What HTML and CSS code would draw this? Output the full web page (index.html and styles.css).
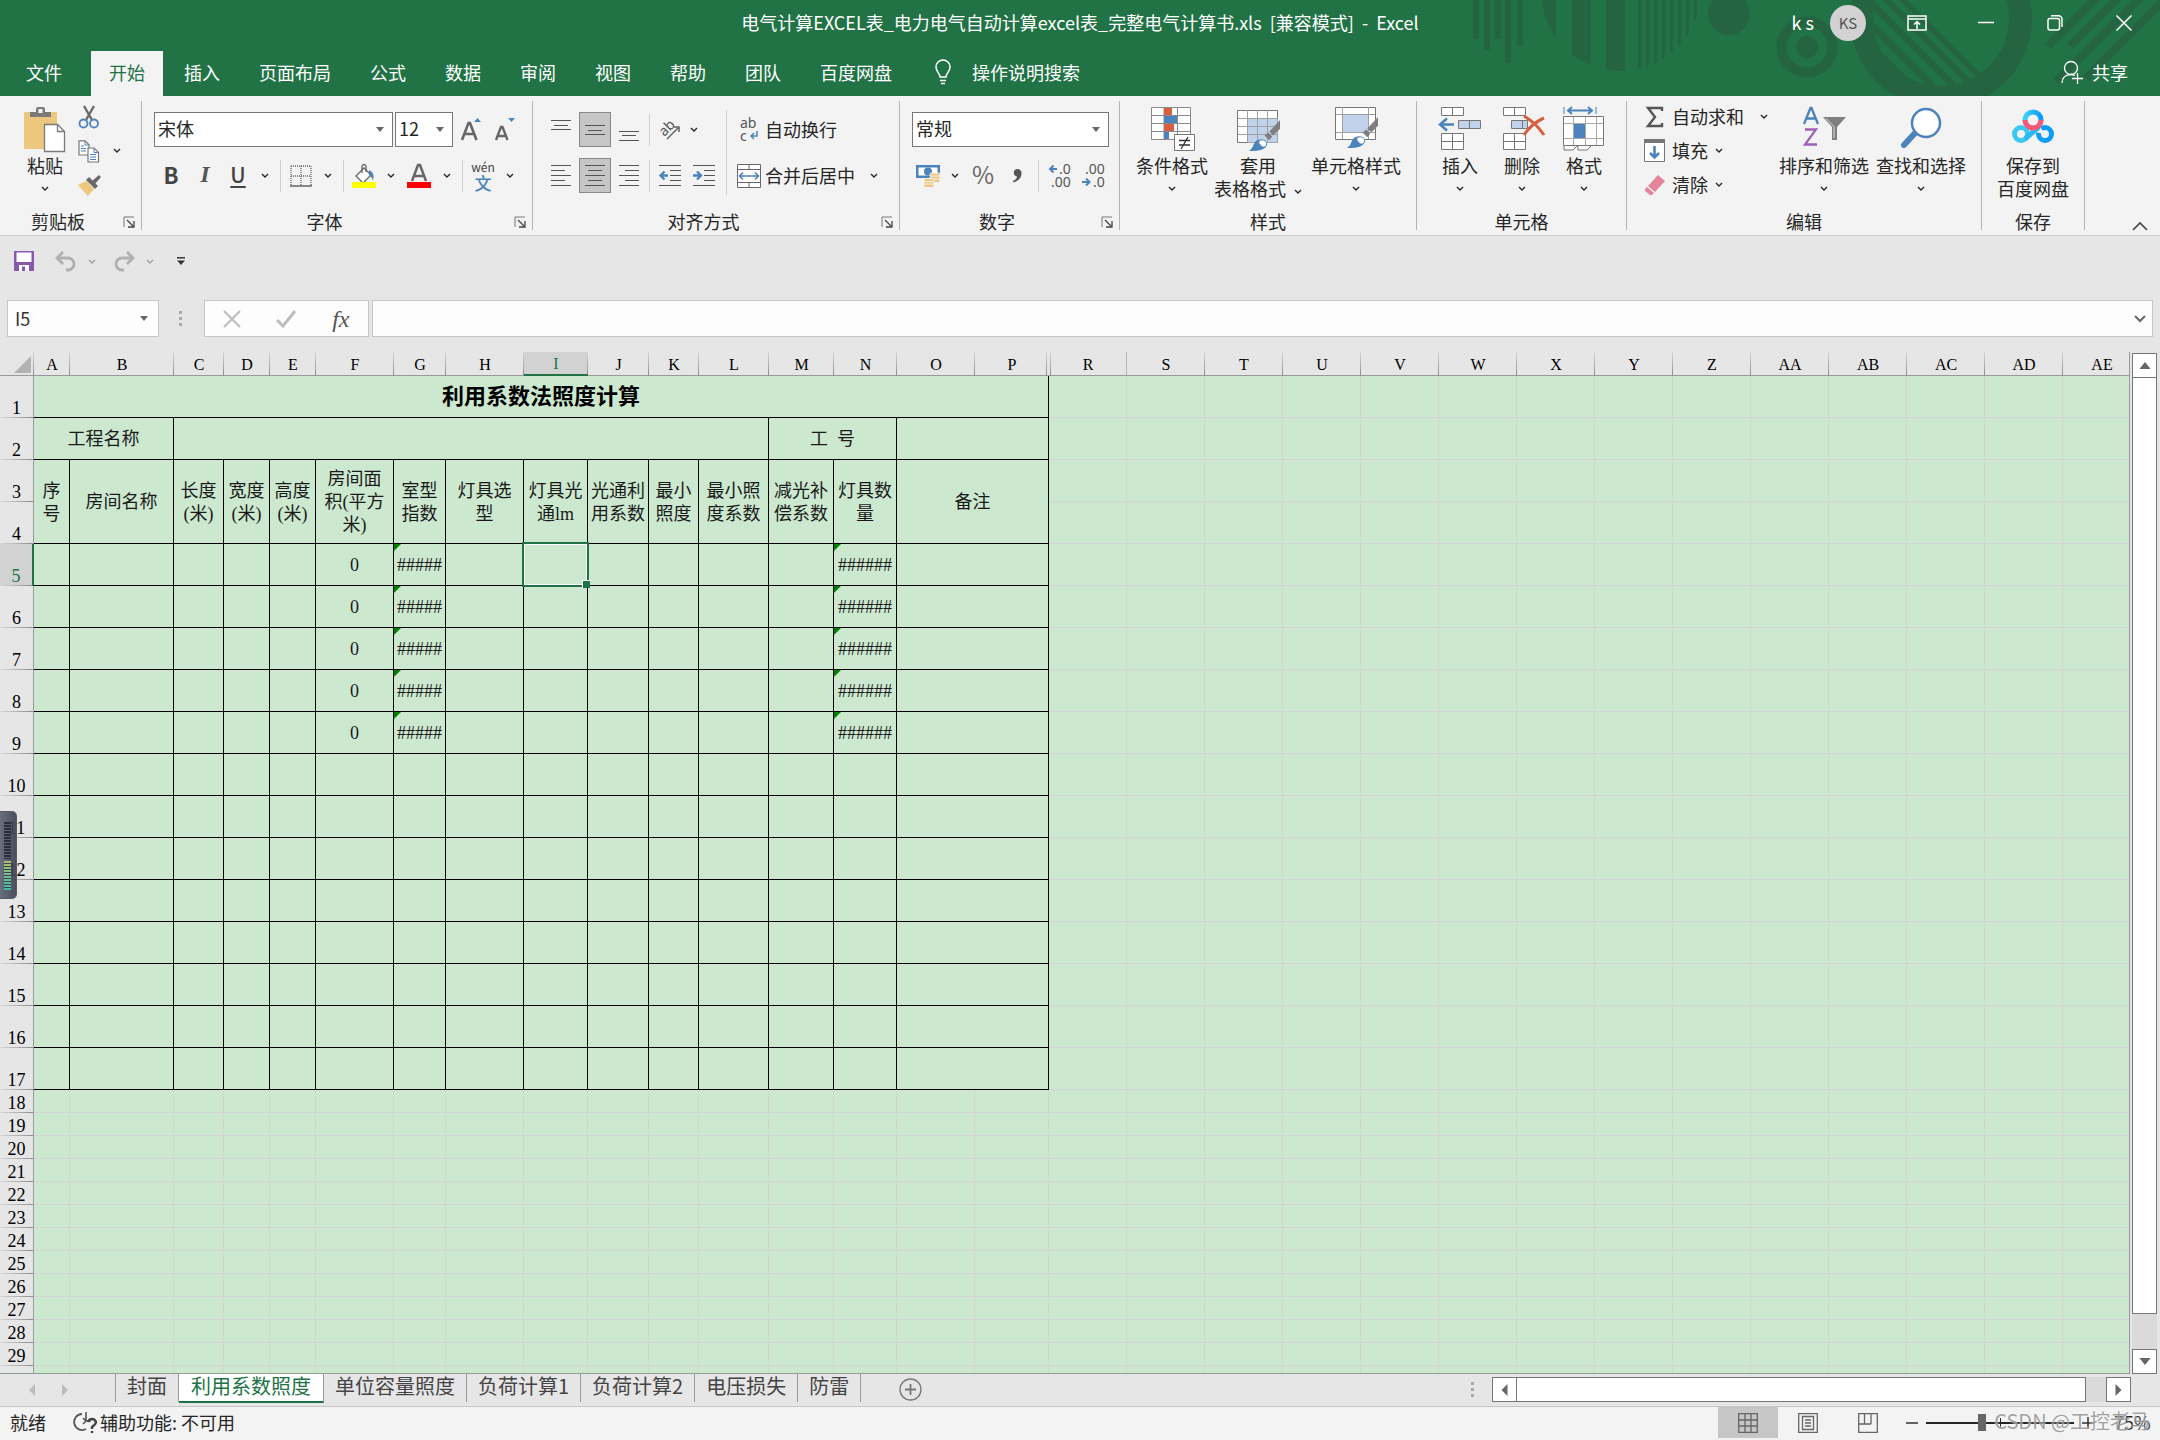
FILE: index.html
```html
<!DOCTYPE html>
<html lang="zh-CN">
<head>
<meta charset="utf-8">
<meta name="viewport" content="width=device-width, initial-scale=1">
<title>电气计算EXCEL表 - Excel</title>
<link rel="stylesheet" href="styles.css">
</head>
<body>
<svg class="defs" aria-hidden="true">
  <symbol id="chev" viewBox="0 0 8 5"><path d="M1 1l3 3 3-3" fill="none" stroke="currentColor" stroke-width="1.4"/></symbol>
  <symbol id="tri" viewBox="0 0 8 5"><path d="M0 0h8L4 5z" fill="currentColor"/></symbol>
  <symbol id="launch" viewBox="0 0 12 12"><path d="M1 11V1h10" fill="none" stroke="#777"/><path d="M4 4l6 6M11 5v6H5" fill="none" stroke="#444" stroke-width="1.3"/></symbol>
  <symbol id="brush" viewBox="0 0 34 34"><path d="M33 1v9l-7 7-4-4z" fill="#7f7f7f"/><path d="M21 14l4 4-3 4-5-5z" fill="#7f7f7f"/><path d="M1 33c5-3 4-8 8-11 4-2 9 0 10 4 0 5-6 7-18 7z" fill="#4c83bc"/><path d="M12 22c4-2 8 1 7 5-2 3-5 2-6 0-1-1-3-2-1-5z" fill="#fff" stroke="#4c83bc"/></symbol>
</svg>

<header class="top">
  <svg class="pattern" viewBox="0 0 720 96" aria-hidden="true">
    <clipPath id="c1"><circle cx="181" cy="-9" r="80"/></clipPath>
    <clipPath id="c2"><circle cx="501" cy="18" r="68"/></clipPath>
    <g fill="#246441">
      <path d="M33 0h6v39h-6zM44 0h6v50h-6zM55 0h6v39h-6zM65 0h6v63h-6zM77 0h6v46h-6z"/>
      <path clip-path="url(#c1)" d="M100 0h16v96h-16zM132 0h19v96h-19zM166 0h19v96h-19zM198 0h3v96h-3zM206 0h3v96h-3zM214 0h3v96h-3zM222 0h3v96h-3zM230 0h3v96h-3zM238 0h3v96h-3zM246 0h3v96h-3zM254 0h3v96h-3z"/>
      <circle cx="289" cy="14" r="21"/><circle cx="367" cy="47" r="11"/>
      <path clip-path="url(#c2)" d="M380 0h10l96 96h-10zM401 0h10l96 96h-10zM423 0h10l96 96h-10zM442 0h9l96 96h-9zM459 0h8l96 96h-8z"/>
    </g>
    <g fill="none" stroke="#246441">
      <circle cx="367" cy="47" r="25.500" stroke-width="10"/>
      <circle cx="501" cy="18" r="79.500" stroke-width="23"/>
      <path stroke-width="8" d="M608 46l52-52M630 46l52-52M616 82l90-90M646 78l80-80"/>
    </g>
  </svg>
  <div class="titlebar">
    <h1 class="doc-title">电气计算EXCEL表_电力电气自动计算excel表_完整电气计算书.xls&nbsp; [兼容模式]&nbsp; -&nbsp; Excel</h1>
    <div class="account">
      <span class="user">k s</span><span class="avatar">KS</span>
      <button class="win" aria-label="功能区显示选项"><svg width="20" height="16" viewBox="0 0 20 16"><path d="M1 1h18v14H1zM1 4h18M10 14V7M7 9.500l3-3 3 3" fill="none" stroke="#fff" stroke-width="1.500"/></svg></button>
      <button class="win" aria-label="最小化"><svg width="16" height="16" viewBox="0 0 16 16"><path d="M0 7.500h16" stroke="#fff" stroke-width="1.500"/></svg></button>
      <button class="win" aria-label="还原"><svg width="16" height="16" viewBox="0 0 16 16"><path d="M4 .8h7.500a3.500 3.500 0 0 1 3.500 3.500V12" fill="none" stroke="#fff" stroke-width="1.400"/><rect x="1" y="3.500" width="11.500" height="11.500" rx="2" fill="none" stroke="#fff" stroke-width="1.500"/></svg></button>
      <button class="win" aria-label="关闭"><svg width="16" height="16" viewBox="0 0 16 16"><path d="M.5.5l15 15M15.500.5l-15 15" stroke="#fff" stroke-width="1.500"/></svg></button>
    </div>
  </div>
  <nav class="tabs">
    <button class="tab file">文件</button><button class="tab on">开始</button><button class="tab">插入</button><button class="tab">页面布局</button><button class="tab">公式</button><button class="tab">数据</button><button class="tab">审阅</button><button class="tab">视图</button><button class="tab">帮助</button><button class="tab">团队</button><button class="tab">百度网盘</button>
    <button class="tell"><svg width="18" height="26" viewBox="0 0 18 26"><path d="M6 18c0-4-4-5-4-10a7 7 0 0 1 14 0c0 5-4 6-4 10zM6 21.500h6M7 24.500h4" fill="none" stroke="#fff" stroke-width="1.500"/></svg>操作说明搜索</button>
    <button class="share"><svg width="23" height="24" viewBox="0 0 23 24"><circle cx="10" cy="8" r="6.500" fill="none" stroke="#fff" stroke-width="1.300"/><path d="M1 23c0-5 3-8.500 9-8.500 2 0 3 .5 4 1M11 18.500h11M16.500 13v11" fill="none" stroke="#fff" stroke-width="1.300"/></svg>共享</button>
  </nav>
</header>

<section class="ribbon">
  <div class="group g-clip">
    <div class="body">
      <button class="big paste"><svg width="42" height="46" viewBox="0 0 42 46"><rect x="0" y="5" width="33" height="37" rx="1" fill="#eec77e"/><path d="M6 10V5h6V2q0-2 2-2h5q2 0 2 2v3h6v5z" fill="#7a7a7a"/><rect x="14.500" y="2" width="4" height="4" fill="#f3f3f3"/><path d="M20.500 17.500h13l7 7v20h-20z" fill="#fff" stroke="#7a7a7a" stroke-width="1.300"/><path d="M33.500 17.500v7h7" fill="none" stroke="#7a7a7a" stroke-width="1.300"/></svg><span>粘贴</span><span class="ch"><svg width="8" height="5"><use href="#chev"/></svg></span></button>
      <div class="stack">
        <button class="line" aria-label="剪切"><svg width="22" height="24" viewBox="0 0 22 24"><path d="M6 1l8 14M16 1L8 15" stroke="#6a6a6a" stroke-width="2.400"/><circle cx="5.500" cy="18.500" r="4" fill="none" stroke="#4c83bc" stroke-width="1.800"/><circle cx="16" cy="18.500" r="4" fill="none" stroke="#4c83bc" stroke-width="1.800"/></svg></button>
        <button class="line" aria-label="复制"><svg width="22" height="23" viewBox="0 0 22 23"><path d="M1 .8h6l4 4V15H1z" fill="#fff" stroke="#777" stroke-width="1.200"/><path d="M10 8h6l4.500 4.500V22H10z" fill="#fff" stroke="#777" stroke-width="1.200"/><path d="M7 1v4h4M16 8v4.500h4M12 14.500h6M12 17h6M12 19.500h6M3 6h3M3 8.500h5M3 11h5" fill="none" stroke="#4c83bc"/></svg><span class="ch"><svg width="8" height="5"><use href="#chev"/></svg></span></button>
        <button class="line" aria-label="格式刷"><svg width="24" height="22" viewBox="0 0 24 22"><path d="M0 11l8-4 8 8-6 7z" fill="#eec77e"/><path d="M8 6l3-3 9 9-3 3z" fill="#6a6a6a"/><path d="M14 7l7-6 2 2-6 7z" fill="#6a6a6a"/></svg></button>
      </div>
    </div>
    <div class="foot"><span>剪贴板</span><button class="dlg" aria-label="剪贴板设置"><svg width="12" height="12"><use href="#launch"/></svg></button></div>
  </div>

  <div class="group g-font">
    <div class="body rows">
      <div class="row">
        <label class="combo w-font"><select aria-label="字体"><option>宋体</option></select><svg width="8" height="5"><use href="#tri"/></svg></label>
        <label class="combo w-size"><select aria-label="字号"><option>12</option></select><svg width="8" height="5"><use href="#tri"/></svg></label>
        <button class="t34" aria-label="增大字号"><svg width="20" height="24" viewBox="0 0 20 24"><path d="M1 22L7.500 5h1.500l6.500 17M3.500 16h9.500" fill="none" stroke="#666" stroke-width="2.600"/><path d="M13 4l3.500-4L20 4z" fill="#4c83bc"/></svg></button>
        <button class="t34" aria-label="减小字号"><svg width="20" height="24" viewBox="0 0 20 24"><path d="M1 22L6 9h1.500l5 13M3 18h7.500" fill="none" stroke="#666" stroke-width="2.400"/><path d="M13 0l3.500 4L20 0z" fill="#4c83bc"/></svg></button>
      </div>
      <div class="row">
        <button class="t34 fb">B</button><button class="t34 fi">I</button><button class="t32 fu">U</button><button class="chb" aria-label="下划线"><svg width="8" height="5"><use href="#chev"/></svg></button><i class="sep"></i>
        <button class="t32" aria-label="边框"><svg width="22" height="22" viewBox="0 0 22 22"><path d="M1 1h20M1 11h20M1 1v20M11 1v20M21 1v20" stroke="#666" stroke-dasharray="1 1" stroke-width="1.300"/><path d="M0 21h22" stroke="#666" stroke-width="1.500"/></svg></button><button class="chb" aria-label="边框选项"><svg width="8" height="5"><use href="#chev"/></svg></button><i class="sep"></i>
        <button class="t32" aria-label="填充颜色"><svg width="24" height="24" viewBox="0 0 24 24"><path d="M12 4l7 7-8 8-7-7z" fill="#fff" stroke="#666" stroke-width="1.300"/><path d="M10 9V2q2-3 4 0v6" fill="none" stroke="#666" stroke-width="1.300"/><path d="M17 6q6 2 4 11-1-4-4-6z" fill="#4c83bc"/><path d="M0 18h24v6H0z" fill="#ff0"/></svg></button><button class="chb" aria-label="填充颜色选项"><svg width="8" height="5"><use href="#chev"/></svg></button>
        <button class="t34" aria-label="字体颜色"><svg width="24" height="24" viewBox="0 0 24 24"><path d="M5 17L11 1h2l6 16M7.500 12h9" fill="none" stroke="#666" stroke-width="2.500"/><path d="M0 18h24v6H0z" fill="#f00"/></svg></button><button class="chb" aria-label="字体颜色选项"><svg width="8" height="5"><use href="#chev"/></svg></button><i class="sep"></i>
        <button class="t32 wen"><span>wén</span><b>文</b></button><button class="chb" aria-label="拼音选项"><svg width="8" height="5"><use href="#chev"/></svg></button>
      </div>
    </div>
    <div class="foot"><span>字体</span><button class="dlg" aria-label="字体设置"><svg width="12" height="12"><use href="#launch"/></svg></button></div>
  </div>

  <div class="group g-align">
    <div class="body">
      <div class="rows">
        <div class="row gap2">
          <button class="t32" aria-label="顶端对齐"><svg width="20" height="22" viewBox="0 0 20 22"><path d="M0 1.500h20M3 6.500h14M0 10.500h20" stroke="#555"/></svg></button>
          <button class="t32 sel" aria-label="垂直居中"><svg width="20" height="22" viewBox="0 0 20 22"><path d="M0 6.500h20M3 11.500h14M0 15.500h20" stroke="#555"/></svg></button>
          <button class="t32" aria-label="底端对齐"><svg width="20" height="22" viewBox="0 0 20 22"><path d="M0 12.500h20M3 16.500h14M0 21.500h20" stroke="#555"/></svg></button>
          <i class="sep"></i>
          <button class="t32" aria-label="方向"><svg width="22" height="22" viewBox="0 0 22 22"><text x="1" y="14" class="ab" transform="rotate(-45 8 11)">ab</text><path d="M8 20L20 8M15 8h5v5" fill="none" stroke="#666" stroke-width="1.500"/></svg></button>
          <button class="ch12" aria-label="方向选项"><svg width="8" height="5"><use href="#chev"/></svg></button>
        </div>
        <div class="row gap2">
          <button class="t32" aria-label="左对齐"><svg width="20" height="22" viewBox="0 0 20 22"><path d="M0 .5h20M0 5.500h14M0 10.500h20M0 15.500h14M0 20.500h20" stroke="#555"/></svg></button>
          <button class="t32 sel" aria-label="居中"><svg width="20" height="22" viewBox="0 0 20 22"><path d="M0 .5h20M3 5.500h14M0 10.500h20M3 15.500h14M0 20.500h20" stroke="#555"/></svg></button>
          <button class="t32" aria-label="右对齐"><svg width="20" height="22" viewBox="0 0 20 22"><path d="M0 .5h20M6 5.500h14M0 10.500h20M6 15.500h14M0 20.500h20" stroke="#555"/></svg></button>
          <i class="sep"></i>
          <button class="t32" aria-label="减少缩进"><svg width="22" height="22" viewBox="0 0 22 22"><path d="M0 .5h22M11 5.500h11M11 10.500h11M11 15.500h11M0 20.500h22" stroke="#555"/><path d="M9 10.500H2M5.500 6.500l-4 4 4 4" fill="none" stroke="#4c83bc" stroke-width="2.400"/></svg></button>
          <button class="t32" aria-label="增加缩进"><svg width="22" height="22" viewBox="0 0 22 22"><path d="M0 .5h22M11 5.500h11M11 10.500h11M11 15.500h11M0 20.500h22" stroke="#555"/><path d="M0 10.500h7M4 6.500l4 4-4 4" fill="none" stroke="#4c83bc" stroke-width="2.400"/></svg></button>
        </div>
      </div>
      <i class="tall"></i>
      <div class="rows">
        <button class="row wide"><svg width="24" height="26" viewBox="0 0 24 26"><text x="3" y="11" class="ab">ab</text><text x="3" y="24" class="ab">c</text><path d="M20 14v5h-6M17 16l-3 3 3 3" fill="none" stroke="#4c83bc" stroke-width="1.500"/></svg><span>自动换行</span></button>
        <button class="row wide"><svg width="24" height="24" viewBox="0 0 24 24"><path d="M.5.500h23v23H.5zM.5 5.500h23M.5 18.500h23M12 0v5.500M12 18.500V24" fill="#fff" stroke="#666"/><path d="M3 12h18M6 8.500L2.500 12 6 15.500M18 8.500l3.500 3.500-3.500 3.500" fill="none" stroke="#4c83bc" stroke-width="1.600"/></svg><span>合并后居中</span><span class="ch"><svg width="8" height="5"><use href="#chev"/></svg></span></button>
      </div>
    </div>
    <div class="foot"><span>对齐方式</span><button class="dlg" aria-label="对齐设置"><svg width="12" height="12"><use href="#launch"/></svg></button></div>
  </div>

  <div class="group g-num">
    <div class="body rows">
      <div class="row"><label class="combo w-num"><select aria-label="数字格式"><option>常规</option></select><svg width="8" height="5"><use href="#tri"/></svg></label></div>
      <div class="row">
        <button class="t32" aria-label="会计数字格式"><svg width="24" height="24" viewBox="0 0 24 24"><path d="M0 1h24v13H0z" fill="#4c83bc"/><path d="M2.500 3.500h19v8h-19z" fill="#fff"/><circle cx="12" cy="7.500" r="4" fill="#4c83bc"/><g fill="#eec77e" stroke="#f3f3f3"><rect x="14" y="9" width="10" height="3.500" rx="1.500"/><rect x="14" y="12" width="10" height="3.500" rx="1.500"/><rect x="14" y="15" width="10" height="3.500" rx="1.500"/><rect x="8" y="14.500" width="10" height="3.500" rx="1.500"/><rect x="8" y="17.500" width="10" height="3.500" rx="1.500"/><rect x="8" y="20" width="10" height="3.500" rx="1.500"/></g></svg></button><button class="chb" aria-label="会计格式选项"><svg width="8" height="5"><use href="#chev"/></svg></button>
        <button class="t34 pct">%</button>
        <button class="t34" aria-label="千位分隔样式"><svg width="10" height="14" viewBox="0 0 10 14"><path d="M5 0a4 4 0 0 1 4.500 4.500C9.500 9 6 12.500 1 13.500V12q4-2 4-4.500A3.800 3.800 0 0 1 5 0z" fill="#555"/></svg></button><i class="sep"></i>
        <button class="t34" aria-label="增加小数位数"><svg width="24" height="26" viewBox="0 0 24 26"><path d="M9 6H2M5.500 2.500L2 6l3.500 3.500" fill="none" stroke="#4c83bc" stroke-width="2"/><text x="11" y="11" class="dec">.0</text><text x="3" y="24" class="dec">.00</text></svg></button>
        <button class="t34" aria-label="减少小数位数"><svg width="24" height="26" viewBox="0 0 24 26"><path d="M0 19h7M4 15.500l3.500 3.500L4 22.500" fill="none" stroke="#4c83bc" stroke-width="2"/><text x="3" y="11" class="dec">.00</text><text x="11" y="24" class="dec">.0</text></svg></button>
      </div>
    </div>
    <div class="foot"><span>数字</span><button class="dlg" aria-label="数字设置"><svg width="12" height="12"><use href="#launch"/></svg></button></div>
  </div>

  <div class="group g-style">
    <div class="body">
      <button class="big w80"><svg width="46" height="46" viewBox="0 0 46 46"><path d="M2.500.5h39v32h-39zM15 0v33M28.500 0v33M2 8.500h40M2 16.500h40M2 24.500h40" fill="#fff" stroke="#8a8a8a"/><path d="M15 1h8v7h-8zM15 17h10v7H15z" fill="#d75f3f"/><path d="M15 9h13v7H15zM15 25h5v7h-5z" fill="#4c83bc"/><path d="M25.500 27.500h20v16h-20z" fill="#fff" stroke="#777"/><path d="M30 33.500h11M30 38h11M39 30l-7 12" stroke="#333" stroke-width="1.300"/></svg><span>条件格式</span><span class="ch"><svg width="8" height="5"><use href="#chev"/></svg></span></button>
      <button class="big w92"><svg width="46" height="46" viewBox="0 0 46 46"><path d="M2.500 3.500h40v32h-40z" fill="#fff" stroke="#777"/><path d="M12.500 11.500h30v24h-30z" fill="#c1d3ea"/><path d="M12.500 3v32M22.500 3v32M32.500 3v32M3 11.500h39M3 19.500h39M3 27.500h39" stroke="#a0a0a0"/><use href="#brush" x="13" y="12" width="33" height="33"/></svg><span>套用</span><span>表格格式<svg class="in" width="8" height="5"><use href="#chev"/></svg></span></button>
      <button class="big w104"><svg width="46" height="46" viewBox="0 0 46 46"><path d="M2.500.5h40v32h-40z" fill="#fff" stroke="#777"/><path d="M9.500 0v32M35.500 0v32M3 7.500h39M3 25.500h39" stroke="#a0a0a0"/><path d="M10 8h25v17H10z" fill="#c1d3ea"/><use href="#brush" x="13" y="9" width="33" height="33"/></svg><span>单元格样式</span><span class="ch"><svg width="8" height="5"><use href="#chev"/></svg></span></button>
    </div>
    <div class="foot"><span>样式</span></div>
  </div>

  <div class="group g-cell">
    <div class="body">
      <button class="big w60"><svg width="44" height="46" viewBox="0 0 44 46"><path d="M3.500.5h22v8h-22zM14.500.5v8M3.500 26.500h22v16h-22zM14.500 26.500v16M3.500 34.500h22" fill="#fff" stroke="#777"/><path d="M20.500 13.500h22v8h-22zM31.500 13.500v8" fill="#c1d3ea" stroke="#777"/><path d="M16 17.500H2M9 11.500l-7 6 7 6" fill="none" stroke="#4c83bc" stroke-width="2.500"/></svg><span>插入</span><span class="ch"><svg width="8" height="5"><use href="#chev"/></svg></span></button>
      <button class="big w60"><svg width="44" height="46" viewBox="0 0 44 46"><path d="M3.500.5h22v8h-22zM14.500.5v8M3.500 26.500h22v16h-22zM14.500 26.500v16M3.500 34.500h22" fill="#fff" stroke="#777"/><path d="M11.500 13.500h16v8h-16zM22.500 13.500v8" fill="#c1d3ea" stroke="#777"/><path d="M24 9q12 7 20 19M44 11Q32 16 24 28" fill="none" stroke="#d75f3f" stroke-width="3"/></svg><span>删除</span><span class="ch"><svg width="8" height="5"><use href="#chev"/></svg></span></button>
      <button class="big w60"><svg width="44" height="46" viewBox="0 0 44 46"><path d="M1.500 9.500h40v29h-40z" fill="#fff" stroke="#777"/><path d="M11.500 10v28M23.500 10v28M34.500 10v28M2 16.500h39M2 31.500h39" stroke="#aaa"/><path d="M12 17h11v14H12z" fill="#4c83bc"/><path d="M2 39v4h9l4-4M16 39v4h9l4-4" fill="#fff" stroke="#777"/><path d="M2 0v7M34 0v7" stroke="#4c83bc"/><path d="M6 3.500h24M10 0L6 3.500 10 7M26 0l4 3.500L26 7" fill="none" stroke="#4c83bc" stroke-width="2"/></svg><span>格式</span><span class="ch"><svg width="8" height="5"><use href="#chev"/></svg></span></button>
    </div>
    <div class="foot"><span>单元格</span></div>
  </div>

  <div class="group g-edit">
    <div class="body">
      <div class="stack">
        <button class="line"><svg width="22" height="22" viewBox="0 0 22 22"><path d="M18 5V2H4l7 9-7 9h14v-3" fill="none" stroke="#555" stroke-width="2.400"/></svg><span>自动求和</span><span class="ch far"><svg width="8" height="5"><use href="#chev"/></svg></span></button>
        <button class="line"><svg width="22" height="24" viewBox="0 0 22 24"><path d="M.5.500h20v22H.5z" fill="#fff" stroke="#777"/><path d="M0 0h21v4H0z" fill="#777"/><path d="M10.500 7v11M6 14l4.500 4.500L15 14" fill="none" stroke="#4c83bc" stroke-width="2.600"/></svg><span>填充</span><span class="ch"><svg width="8" height="5"><use href="#chev"/></svg></span></button>
        <button class="line"><svg width="22" height="22" viewBox="0 0 22 22"><path d="M14 1l7 6-10 11-7-6z" fill="#e5839a"/><path d="M3 13l7 6-2 2H6l-5-4v-2z" fill="#e5839a"/></svg><span>清除</span><span class="ch"><svg width="8" height="5"><use href="#chev"/></svg></span></button>
      </div>
      <button class="big w94"><svg width="44" height="46" viewBox="0 0 44 46"><path d="M2 17L8.500 1h1L16 17M4 11.500h10" fill="none" stroke="#4c83bc" stroke-width="2.300"/><path d="M3 22.500h11L3 37.500h12" fill="none" stroke="#9b62b8" stroke-width="2.300"/><path d="M21 10h23l-9 10v13h-5V20z" fill="#7f7f7f"/><path d="M24 11.500l8 8V31" fill="none" stroke="#ddd"/></svg><span>排序和筛选</span><span class="ch"><svg width="8" height="5"><use href="#chev"/></svg></span></button>
      <button class="big w94 find"><svg width="44" height="46" viewBox="0 0 44 46"><path d="M17 25L5 38" stroke="#4c83bc" stroke-width="6" stroke-linecap="round"/><circle cx="27" cy="16" r="14" fill="#fff" stroke="#4c83bc" stroke-width="2.500"/></svg><span>查找和选择</span><span class="ch"><svg width="8" height="5"><use href="#chev"/></svg></span></button>
    </div>
    <div class="foot"><span>编辑</span></div>
  </div>

  <div class="group g-save">
    <div class="body">
      <button class="big w94"><svg width="42" height="46" viewBox="0 0 42 46"><defs><linearGradient id="bd"><stop offset="0" stop-color="#3fd0f5"/><stop offset="1" stop-color="#0a9cf7"/></linearGradient></defs><circle cx="9" cy="27" r="6.500" fill="none" stroke="#3cc8f3" stroke-width="5"/><circle cx="33" cy="27" r="6.500" fill="none" stroke="#0a9cf7" stroke-width="5" stroke-dasharray="36 5" stroke-dashoffset="15"/><path d="M13 32L27 20" stroke="#2ab9f5" stroke-width="5"/><circle cx="21" cy="13" r="8" fill="#f3f3f3" stroke="url(#bd)" stroke-width="5"/><path d="M13 13a8 8 0 0 0 16 0" fill="none" stroke="#fb5779" stroke-width="5"/></svg><span>保存到</span><span>百度网盘</span></button>
    </div>
    <div class="foot"><span>保存</span></div>
  </div>
  <button class="collapse" aria-label="折叠功能区"><svg width="16" height="10" viewBox="0 0 16 10"><path d="M1 9l7-7 7 7" fill="none" stroke="#444" stroke-width="1.600"/></svg></button>
</section>

<div class="qat">
  <button class="q1" aria-label="保存"><svg width="20" height="20" viewBox="0 0 20 20"><path d="M0 0h20v20H0z" fill="#8757ad"/><path d="M2.500 1.500h15v9.500h-15zM5 14h10v6H5z" fill="#fff"/><path d="M8 15.500h3V20H8z" fill="#8757ad"/></svg></button>
  <button class="q2" aria-label="撤消"><svg width="22" height="20" viewBox="0 0 22 20"><path d="M2 7h11a6 6 0 0 1 0 12h-2M8 1L2 7l6 6" fill="none" stroke="#b0b0b0" stroke-width="2.800"/></svg></button>
  <button class="q3" aria-label="撤消选项"><svg width="8" height="5"><use href="#chev"/></svg></button>
  <button class="q2" aria-label="恢复"><svg width="22" height="20" viewBox="0 0 22 20"><path d="M20 7H9a6 6 0 0 0 0 12h2M14 1l6 6-6 6" fill="none" stroke="#b0b0b0" stroke-width="2.800"/></svg></button>
  <button class="q3" aria-label="恢复选项"><svg width="8" height="5"><use href="#chev"/></svg></button>
  <button class="q4" aria-label="自定义快速访问工具栏"><svg width="8" height="8" viewBox="0 0 8 8"><path d="M0 .8h8" stroke="#333" stroke-width="1.500"/><path d="M0 3.500h8L4 8z" fill="#333"/></svg></button>
</div>

<div class="formula">
  <div class="namebox"><input value="I5" aria-label="名称框"><svg width="8" height="5"><use href="#tri"/></svg></div>
  <span class="dots"></span>
  <div class="fx">
    <button aria-label="取消"><svg width="18" height="18" viewBox="0 0 18 18"><path d="M1 1l16 16M17 1L1 17" stroke="#bdbdbd" stroke-width="2"/></svg></button>
    <button aria-label="输入"><svg width="20" height="18" viewBox="0 0 20 18"><path d="M1 10l6 6L19 1" fill="none" stroke="#bdbdbd" stroke-width="3"/></svg></button>
    <button class="fxi">fx</button>
  </div>
  <div class="fin"><input aria-label="编辑栏"><svg width="12" height="8" viewBox="0 0 12 8"><path d="M1 1l5 5 5-5" fill="none" stroke="#666" stroke-width="2"/></svg></div>
</div>

<main class="sheet">
  <div class="viewport"><table class="grid" id="grid"></table></div>
  <div class="vscroll">
    <button class="arrow" aria-label="向上滚动"><svg width="12" height="7" viewBox="0 0 8 5"><path d="M0 5h8L4 0z" fill="#666"/></svg></button>
    <div class="vthumb"></div>
    <div class="vtrack"></div>
    <button class="arrow" aria-label="向下滚动"><svg width="12" height="7" viewBox="0 0 8 5"><path d="M0 0h8L4 5z" fill="#666"/></svg></button>
  </div>
  <div class="meter"><i class="dim"></i><i class="lit"></i></div>
</main>

<div class="sheetbar">
  <button class="nav" aria-label="上一个工作表"><svg width="6" height="12" viewBox="0 0 6 12"><path d="M6 0v12L0 6z" fill="#bbb"/></svg></button>
  <button class="nav" aria-label="下一个工作表"><svg width="6" height="12" viewBox="0 0 6 12"><path d="M0 0v12l6-6z" fill="#bbb"/></svg></button>
  <div class="names">
    <button class="name">封面</button><button class="name cur">利用系数照度</button><button class="name">单位容量照度</button><button class="name">负荷计算1</button><button class="name">负荷计算2</button><button class="name">电压损失</button><button class="name">防雷</button>
  </div>
  <button class="add" aria-label="新工作表"><svg width="23" height="23" viewBox="0 0 23 23"><circle cx="11.500" cy="11.500" r="10.500" fill="none" stroke="#777" stroke-width="1.300"/><path d="M11.500 6v11M6 11.500h11" stroke="#777" stroke-width="1.800"/></svg></button>
  <span class="dots push"></span>
  <div class="hscroll">
    <button class="arrow" aria-label="向左滚动"><svg width="7" height="12" viewBox="0 0 6 12"><path d="M6 0v12L0 6z" fill="#666"/></svg></button>
    <div class="hthumb"></div>
    <div class="htrack"></div>
    <button class="arrow" aria-label="向右滚动"><svg width="7" height="12" viewBox="0 0 6 12"><path d="M0 0v12l6-6z" fill="#666"/></svg></button>
  </div>
</div>

<footer class="status">
  <span class="ready">就绪</span>
  <button class="acc"><svg width="22" height="22" viewBox="0 0 22 22"><path d="M7 3a8 8 0 1 0 4 15" fill="none" stroke="#555" stroke-width="1.800"/><path d="M11 1v9h5M8 7l3 3-3 3" fill="none" stroke="#555" stroke-width="1.600"/><path d="M13 11q1-3 4-3t4 3q0 2-4 5v2M17 20v2" fill="none" stroke="#444" stroke-width="2.400"/></svg>辅助功能: 不可用</button>
  <div class="views">
    <button class="view on" aria-label="普通"><svg width="20" height="20" viewBox="0 0 20 20"><path d="M.7.700h18.600v18.600H.7zM7 1v18M13 1v18M1 7h18M1 13h18" fill="none" stroke="#666" stroke-width="1.300"/></svg></button>
    <button class="view" aria-label="页面布局"><svg width="20" height="20" viewBox="0 0 20 20"><path d="M.7.700h18.600v18.600H.7zM4.500 3.500h11v13h-11zM7 7h6M7 10h6M7 13h6" fill="none" stroke="#666" stroke-width="1.300"/></svg></button>
    <button class="view" aria-label="分页预览"><svg width="20" height="20" viewBox="0 0 20 20"><path d="M.7.700h18.600v18.600H.7zM6.500 1v10M13 1v10M1 11h12" fill="none" stroke="#666" stroke-width="1.300"/></svg></button>
  </div>
  <button class="zb" aria-label="缩小"><svg width="12" height="12" viewBox="0 0 12 12"><path d="M0 6h12" stroke="#333" stroke-width="1.500"/></svg></button>
  <input class="zoom" type="range" min="0" max="100" value="37" aria-label="缩放">
  <button class="zb" aria-label="放大"><svg width="12" height="12" viewBox="0 0 12 12"><path d="M0 6h12M6 0v12" stroke="#333" stroke-width="1.500"/></svg></button>
  <span class="pctv">75%</span>
  <span class="mark">CSDN @工控老马</span>
</footer>
<script src="script.js"></script>
</body>
</html>
```
FILE: styles.css
```css
* { box-sizing: border-box; }
body {
  margin: 0; height: 100vh; display: flex; flex-direction: column; overflow: hidden;
  background: #e6e6e6; color: #262626;
  font: 18px/24px "Noto Sans CJK SC", "Noto Sans", sans-serif;
}
button { margin: 0; padding: 0; border: 0; background: none; color: inherit; font: inherit; white-space: nowrap; }
svg { display: block; flex: none; overflow: visible; }
.defs { display: none; }

/* title and tabs */
.top { position: relative; background: #217346; color: #fff; overflow: hidden; flex: none; }
.pattern { position: absolute; top: 0; right: 0; width: 720px; height: 96px; overflow: hidden; }
.titlebar { position: relative; display: grid; grid-template-columns: 1fr auto 1fr; align-items: center; height: 46px; }
.doc-title { grid-column: 2; margin: 0; padding-bottom: 2px; font-size: 18px; font-weight: 400; line-height: 24px; }
.account { display: flex; align-items: center; justify-content: flex-end; padding-right: 2px; }
.user { margin-right: 16px; padding-bottom: 2px; }
.avatar { width: 36px; height: 36px; margin-right: 16px; border-radius: 50%; background: #d2d2d2; color: #555; font-size: 15px; line-height: 36px; text-align: center; }
.win { width: 69px; height: 46px; display: flex; align-items: center; justify-content: center; }
.tabs { position: relative; display: flex; gap: 3px; padding-top: 5px; height: 50px; }
.tab { height: 45px; padding: 0 18px 4px; }
.tab.file { padding-left: 26px; margin-right: 8px; }
.tab.on { background: #f3f3f3; color: #217346; }
.tell, .share { display: flex; align-items: center; gap: 20px; height: 45px; padding-bottom: 3px; }
.tell { margin-left: 21px; }
.share { margin-left: auto; margin-right: 32px; gap: 8px; }

/* ribbon */
.ribbon { display: flex; flex: none; height: 140px; padding-top: 5px; background: #f3f3f3; border-bottom: 1px solid #d0d0d0; }
.group { display: flex; flex-direction: column; height: 129px; border-right: 1px solid #b5b5b5; flex: none; }
.g-clip { width: 142px; }
.g-font { width: 391px; }
.g-align { width: 367px; }
.g-num { width: 220px; }
.g-style { width: 297px; }
.g-cell { width: 210px; }
.g-edit { width: 355px; }
.g-save { width: 103px; }
.body { display: flex; flex: 1; padding-left: 12px; }
.g-clip .body { padding-left: 20px; gap: 8px; }
.g-cell .body { padding-left: 13px; gap: 2px; }
.g-edit .body { padding-left: 17px; gap: 3px; }
.g-save .body { padding-left: 4px; }
.foot { display: flex; height: 15px; margin-bottom: 1px; align-items: center; line-height: 14px; }
.foot span { flex: 1; padding-bottom: 2px; text-align: center; }
.dlg { width: 25px; padding-left: 7px; }
.big { display: flex; flex-direction: column; align-items: center; padding-top: 6px; line-height: 23px; }
.big > svg { margin-bottom: 1px; }
.big .ch { height: 23px; display: flex; align-items: center; }
.in { display: inline-block; margin-left: 8px; vertical-align: middle; }
.paste { width: 50px; }
.w60 { width: 60px; }
.w80 { width: 80px; }
.w92 { width: 92px; }
.w104 { width: 104px; }
.w94 { width: 94px; }
.stack { display: flex; flex-direction: column; }
.g-edit .stack { width: 130px; }
.line { display: flex; align-items: center; height: 34px; padding-bottom: 2px; gap: 6px; }
.line span { padding-bottom: 2px; }
.line .ch { padding-left: 1px; }
.g-clip .line .ch { padding-left: 7px; }
.line .far { padding-left: 10px; }
.rows { display: flex; flex-direction: column; gap: 11px; padding-top: 11px; }
.row { display: flex; align-items: center; height: 35px; }
.row > button { display: flex; align-items: center; justify-content: center; height: 35px; }
.gap2 { gap: 2px; }
.row > .t34 { width: 34px; }
.row > .t32 { width: 32px; }
.row > .chb { width: 22px; }
.row > .ch12 { width: 12px; }
.row > .sel { background: #c6c6c6; border: 1px solid #8a8a8a; }
.sep { width: 1px; height: 32px; margin: 0 4px; background: #d0d0d0; }
.gap2 .sep { margin: 0 2px; }
.tall { width: 1px; height: 85px; margin: 9px 10px 0 6px; background: #d0d0d0; }
.wide { gap: 4px; }
.wide span { padding-bottom: 2px; }
.wide .ch { padding: 0 0 0 11px; }
.row > .fb, .row > .fi, .row > .fu, .row > .pct { padding-bottom: 3px; }
.fb { font-weight: 700; font-size: 22px; color: #444; }
.row > .fi { font: italic 700 24px "Liberation Serif", serif; color: #555; }
.fu { font-weight: 500; font-size: 21px; text-decoration: underline; text-underline-offset: 3px; color: #444; }
.pct { font-size: 24px; color: #666; }
.row > .wen { flex-direction: column; font-size: 12px; line-height: 15px; color: #444; }
.wen b { font-size: 17px; line-height: 18px; font-weight: 500; color: #4c83bc; }
.ab, .dec { font: 14px "Noto Sans", sans-serif; fill: #555; }
.combo { display: grid; grid-template-columns: 1fr 24px; align-items: center; height: 35px; background: #fff; border: 1px solid #777; color: #666; }
.combo select { grid-column: 1 / 3; grid-row: 1; width: 100%; height: 33px; padding: 0 3px 3px; border: 0; background: none; appearance: none; font: inherit; color: #262626; }
.combo svg { grid-column: 2; grid-row: 1; justify-self: center; }
.w-font { width: 239px; }
.w-size { width: 58px; margin: 0 1px 0 2px; }
.w-num { width: 197px; }
.collapse { align-self: flex-end; margin: 0 12px 4px auto; }

/* quick access and formula bar */
.qat { display: flex; align-items: center; flex: none; height: 50px; padding-left: 14px; color: #a0a0a0; }
.q1 { margin-right: 21px; }
.q2 { width: 22px; }
.q3 { width: 36px; padding-left: 11px; }
.q4 { margin-left: 6px; }
.formula { display: flex; align-items: center; flex: none; height: 66px; padding: 14px 7px 15px; }
.namebox, .fx, .fin { display: flex; align-items: center; height: 37px; background: #fdfdfd; border: 1px solid #c6c6c6; color: #666; }
.namebox { width: 152px; padding-right: 10px; }
.namebox input, .fin input { flex: 1; min-width: 0; height: 35px; padding: 0 7px 2px; border: 0; background: none; font: inherit; color: #333; }
.dots { width: 3px; height: 15px; background: repeating-linear-gradient(#aaa 0 3px, transparent 3px 6px); }
.formula .dots { margin: 0 22px 0 20px; }
.fx { width: 165px; margin-right: 3px; }
.fx button { flex: 1; display: flex; justify-content: center; }
.fx .fxi { font: italic 24px/30px "Liberation Serif", serif; color: #555; }
.fin { flex: 1; padding-right: 6px; }

/* grid */
.sheet { position: relative; display: flex; flex: 1; min-height: 0; }
.viewport { flex: 1; min-width: 0; overflow: hidden; border-right: 1px solid #999; border-bottom: 1px solid #8fa091; background: #cce8cf; }
.grid { width: 1px; table-layout: fixed; border-collapse: separate; border-spacing: 0; font: 18px/23px "Liberation Serif", "Noto Sans CJK SC", serif; color: #1a1a1a; }
.grid td, .grid th { padding: 0; overflow: visible; text-align: center; white-space: nowrap; border: solid #d3d5d3; border-width: 0 1px 1px 0; }
.grid td { padding-top: 2px; }
.grid .ink { border-color: #000; }
.grid .title { padding-top: 0; font-size: 22px; font-weight: 700; color: #000; }
.grid thead th { height: 24px; padding-top: 2px; line-height: 20px; font-size: 16px; font-weight: 400; color: #000; border: 0; border-bottom: 1px solid #999; background: linear-gradient(#d8d8d8, #8c8c8c) right / 1px 100% no-repeat #e6e6e6; }
.grid thead .pre { background-position: right 2px top; }
.grid thead .post { background-position: left 1px top; box-shadow: inset -1px 0 #b5b5b5; }
.grid thead .hot { background-color: #d2d2d2; color: #217346; border-bottom: 2px solid #217346; }
.grid tbody th { height: 42px; font-size: 18px; line-height: 20px; font-weight: 400; color: #000; vertical-align: bottom; border: 0; border-right: 1px solid #999; background: linear-gradient(90deg, #d8d8d8, #8c8c8c) bottom / 100% 1px no-repeat #e6e6e6; }
.grid tbody .low th { height: 23px; }
.grid .low td { padding: 0; }
.grid tbody .hot { background-color: #d2d2d2; color: #217346; border-right: 2px solid #217346; }
.corner svg { margin: 0 0 0 14px; }
.err, .active { position: relative; }
.err::before { content: ""; position: absolute; top: 0; left: 0; border-top: 7px solid #008000; border-right: 7px solid transparent; }
.active span { position: absolute; inset: -2px; z-index: 1; border: 2px solid #217346; box-shadow: inset 0 0 0 1px #fff; }
.active span::after { content: ""; position: absolute; right: -3px; bottom: -3px; width: 7px; height: 7px; background: #217346; border: solid #fff; border-width: 1px 0 0 1px; }
.vscroll { display: flex; flex-direction: column; width: 30px; padding: 1px 3px 0 2px; }
.arrow { display: flex; align-items: center; justify-content: center; flex: none; width: 25px; height: 25px; background: #fff; border: 1px solid #777; }
.vthumb { flex: 938; margin-top: -1px; background: #fff; border: 1px solid #777; }
.vtrack { flex: 35; background: #dadada; }
.meter { position: absolute; left: 0; top: 459px; width: 17px; height: 88px; border: 1px solid #555a66; border-left: 0; border-radius: 0 5px 5px 0; background: linear-gradient(90deg, #5b6272e6, #3b3d4ee6); display: flex; flex-direction: column; gap: 2px; padding: 10px 0 0 4px; }
.dim { width: 7px; height: 37px; background: repeating-linear-gradient(#2c2e3b 0 2px, transparent 2px 3px); }
.lit { width: 7px; height: 29px; background: repeating-linear-gradient(transparent 0 2px, #3b4350 2px 3px), linear-gradient(#a9c266, #3fb8ae); }

/* sheet tabs */
.sheetbar { display: flex; align-items: center; flex: none; height: 32px; padding: 0 29px 1px; }
.nav { width: 33px; }
.names { display: flex; margin-left: 20px; align-self: flex-start; }
.name { height: 28px; padding: 0 11px 4px; border-right: 1px solid #999; color: #444; font-size: 20px; line-height: 24px; }
.name:first-child { border-left: 1px solid #999; }
.name.cur { height: 29px; padding: 0 12px 3px; background: #fff; color: #217346; border-bottom: 2px solid #217346; }
.add { margin-left: 38px; }
.push { margin: 0 18px 0 auto; }
.hscroll { display: flex; width: 639px; }
.hthumb { flex: 1; margin-left: -1px; background: #fff; border: 1px solid #777; }
.htrack { width: 20px; background: #dadada; }

/* status bar */
.status { position: relative; display: flex; align-items: center; flex: none; height: 34px; padding: 0 9px 2px 10px; background: #f3f3f3; border-top: 1px solid #c6c6c6; }
.ready, .acc, .pctv { padding-bottom: 2px; }
.acc { display: flex; align-items: center; gap: 3px; margin-left: 29px; }
.views { display: flex; margin-left: auto; }
.view { display: flex; align-items: center; justify-content: center; width: 60px; height: 31px; }
.view.on { background: #c6c6c6; }
.views + .zb { margin: 0 8px; }
.zoom { width: 148px; height: 17px; margin: 0 8px 0 0; appearance: none; background: linear-gradient(#262626, #262626) center / 100% 2px no-repeat, linear-gradient(#262626, #262626) center / 1px 9px no-repeat; }
.zoom::-webkit-slider-thumb { appearance: none; width: 8px; height: 17px; background: #666; border: 0; }
.pctv { width: 37px; margin-left: 20px; }
.mark { position: absolute; right: 10px; top: 1px; font-size: 20px; line-height: 26px; color: rgba(120, 120, 120, .7); text-shadow: 0 0 2px #fff; }
```
FILE: script.js
```js
// Column letters with their widths; column Q is hidden.
const columns = [
  ['A', 36], ['B', 104], ['C', 50], ['D', 46], ['E', 46], ['F', 78], ['G', 52], ['H', 78],
  ['I', 64], ['J', 61], ['K', 50], ['L', 70], ['M', 65], ['N', 63], ['O', 78], ['P', 74],
  ...['R', 'S', 'T', 'U', 'V', 'W', 'X', 'Y', 'Z', 'AA', 'AB', 'AC', 'AD', 'AE'].map(c => [c, 78]),
];
const inTable = 16;
const plain = n => '<td></td>'.repeat(n);
const ink = (text = '', attrs = '', cls = '') => `<td class="ink ${cls}" ${attrs}>${text}</td>`;

const headings = ['序<br>号', '房间名称', '长度<br>(米)', '宽度<br>(米)', '高度<br>(米)',
  '房间面<br>积(平方<br>米)', '室型<br>指数', '灯具选<br>型', '灯具光<br>通lm', '光通利<br>用系数',
  '最小<br>照度', '最小照<br>度系数', '减光补<br>偿系数', '灯具数<br>量'];

function cells(row) {
  if (row === 1) return ink('利用系数法照度计算', 'colspan="16"', 'title');
  if (row === 2) return ink('工程名称', 'colspan="2"') + ink('', 'colspan="10"') +
    ink('工&nbsp;&nbsp;号', 'colspan="2"') + ink('', 'colspan="2"');
  if (row === 3) return headings.map(h => ink(h, 'rowspan="2"')).join('') + ink('备注', 'colspan="2" rowspan="2"');
  if (row === 4) return '';
  if (row > 17) return plain(inTable);
  let out = '';
  for (const [name] of columns.slice(0, 14)) {
    if (row < 10 && name === 'F') out += ink('0');
    else if (row < 10 && name === 'G') out += ink('#####', '', 'err');
    else if (row < 10 && name === 'N') out += ink('######', '', 'err');
    else if (row === 5 && name === 'I') out += ink('<span></span>', '', 'active');
    else out += ink();
  }
  return out + ink('', 'colspan="2"');
}

const headClass = { I: 'hot', P: 'pre', R: 'post' };
let html = '<colgroup><col style="width:34px">' +
  columns.map(c => `<col style="width:${c[1]}px">`).join('') + '</colgroup><thead><tr>' +
  '<th class="corner"><svg width="17" height="17"><path d="M17 0v17H0z" fill="#b2b2b2"/></svg></th>' +
  columns.map(c => `<th class="${headClass[c[0]] || ''}">${c[0]}</th>`).join('') + '</tr></thead><tbody>';
for (let row = 1; row <= 30; row++) {
  html += `<tr class="${row > 17 ? 'low' : ''}"><th class="${row === 5 ? 'hot' : ''}">${row < 30 ? row : ''}</th>` +
    cells(row) + plain(columns.length - inTable) + '</tr>';
}
document.getElementById('grid').innerHTML = html + '</tbody>';
```
